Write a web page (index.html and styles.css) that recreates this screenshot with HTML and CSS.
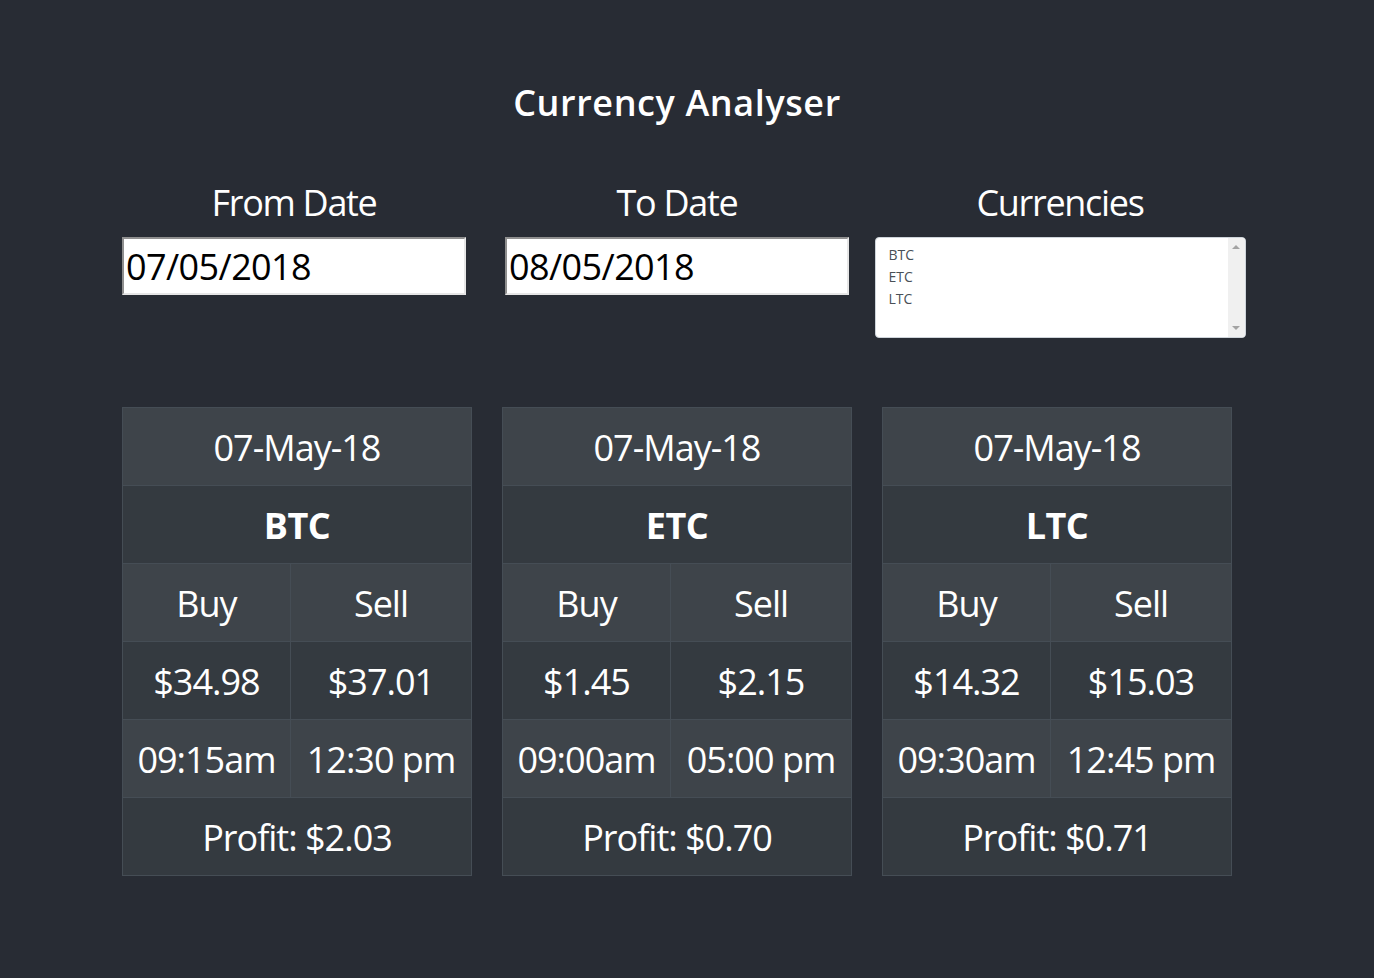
FILE: index.html
```html
<!DOCTYPE html>
<html lang="en">
<head>
<meta charset="utf-8">
<title>Currency Analyser</title>
<link rel="stylesheet" href="styles.css">
</head>
<body>
<div class="app">
  <h1 class="title">Currency Analyser</h1>
  <div class="filters">
    <div class="field">
      <label class="label" for="from">From Date</label>
      <input class="date-input" id="from" type="text" value="07/05/2018">
    </div>
    <div class="field">
      <label class="label" for="to">To Date</label>
      <input class="date-input" id="to" type="text" value="08/05/2018">
    </div>
    <div class="field">
      <div class="label">Currencies</div>
      <div class="multi-select">
        <ul class="options">
          <li>BTC</li>
          <li>ETC</li>
          <li>LTC</li>
        </ul>
        <div class="scrollbar">
          <span class="arrow up"></span>
          <span class="arrow down"></span>
        </div>
      </div>
    </div>
  </div>

  <div class="cards">
    <table class="quote">
      <colgroup><col class="c1"><col class="c2"></colgroup>
      <tr class="light"><td colspan="2">07-May-18</td></tr>
      <tr class="dark"><td colspan="2" class="sym">BTC</td></tr>
      <tr class="light"><td>Buy</td><td>Sell</td></tr>
      <tr class="dark"><td>$34.98</td><td>$37.01</td></tr>
      <tr class="light"><td>09:15am</td><td>12:30 pm</td></tr>
      <tr class="dark"><td colspan="2">Profit: $2.03</td></tr>
    </table>
    <table class="quote">
      <colgroup><col class="c1"><col class="c2"></colgroup>
      <tr class="light"><td colspan="2">07-May-18</td></tr>
      <tr class="dark"><td colspan="2" class="sym">ETC</td></tr>
      <tr class="light"><td>Buy</td><td>Sell</td></tr>
      <tr class="dark"><td>$1.45</td><td>$2.15</td></tr>
      <tr class="light"><td>09:00am</td><td>05:00 pm</td></tr>
      <tr class="dark"><td colspan="2">Profit: $0.70</td></tr>
    </table>
    <table class="quote">
      <colgroup><col class="c1"><col class="c2"></colgroup>
      <tr class="light"><td colspan="2">07-May-18</td></tr>
      <tr class="dark"><td colspan="2" class="sym">LTC</td></tr>
      <tr class="light"><td>Buy</td><td>Sell</td></tr>
      <tr class="dark"><td>$14.32</td><td>$15.03</td></tr>
      <tr class="light"><td>09:30am</td><td>12:45 pm</td></tr>
      <tr class="dark"><td colspan="2">Profit: $0.71</td></tr>
    </table>
  </div>
</div>
</body>
</html>
```

FILE: styles.css
```css
html, body {
  margin: 0;
  background: #282c34;
}
body {
  padding-right: 20px;
  font-family: "Open Sans", "Noto Sans", sans-serif;
  color: #ffffff;
}
.app {
  text-align: center;
}
.title {
  margin: 76px 0 0;
  font-size: 36px;
  line-height: 54px;
  font-weight: 600;
  letter-spacing: 0.6px;
}
.filters {
  width: 1149px;
  margin: 46px auto 0;
  display: grid;
  grid-template-columns: repeat(3, 383px);
  align-items: start;
}
.field {
  display: flex;
  flex-direction: column;
  align-items: center;
}
.label {
  display: block;
  font-size: 36px;
  line-height: 54px;
  letter-spacing: -1.3px;
  margin-bottom: 7px;
}
.date-input {
  box-sizing: border-box;
  width: 344px;
  height: 58px;
  margin: 0;
  padding: 0 2px;
  border: 2px solid;
  border-color: #8f8f8f #e6e6e6 #e6e6e6 #8f8f8f;
  background: #fff;
  color: #000;
  font-family: inherit;
  font-size: 36px;
  letter-spacing: -0.6px;
}
.multi-select {
  box-sizing: border-box;
  width: 371px;
  height: 101px;
  border: 1px solid #ced4da;
  border-radius: 4px;
  background: #fff;
  display: flex;
  overflow: hidden;
}
.options {
  flex: 1;
  margin: 0;
  padding: 6px 0 0 13px;
  list-style: none;
  text-align: left;
  color: #495057;
  font-size: 14px;
  line-height: 22px;
}
.scrollbar {
  width: 17px;
  background: #f0f0f0;
  display: flex;
  flex-direction: column;
  justify-content: space-between;
  align-items: center;
  padding: 7px 0 7px;
}
.arrow {
  width: 0;
  height: 0;
  border-left: 4px solid transparent;
  border-right: 4px solid transparent;
}
.arrow.up {
  border-bottom: 4px solid #a3a3a3;
}
.arrow.down {
  border-top: 4px solid #a3a3a3;
}
.cards {
  margin-top: 69px;
  display: flex;
  justify-content: center;
  gap: 30px;
}
.quote {
  border-collapse: collapse;
  table-layout: fixed;
  width: 349px;
  font-size: 36px;
  line-height: 54px;
  letter-spacing: -1px;
}
.quote .c1 { width: 168px; }
.quote .c2 { width: 181px; }
.quote td {
  border: 1px solid #454d55;
  padding: 13px 0 10px;
  text-align: center;
  white-space: nowrap;
}
.quote .light { background: #3e444a; }
.quote .dark { background: #343a40; }
.quote .sym { font-weight: 700; letter-spacing: -0.5px; }
```
